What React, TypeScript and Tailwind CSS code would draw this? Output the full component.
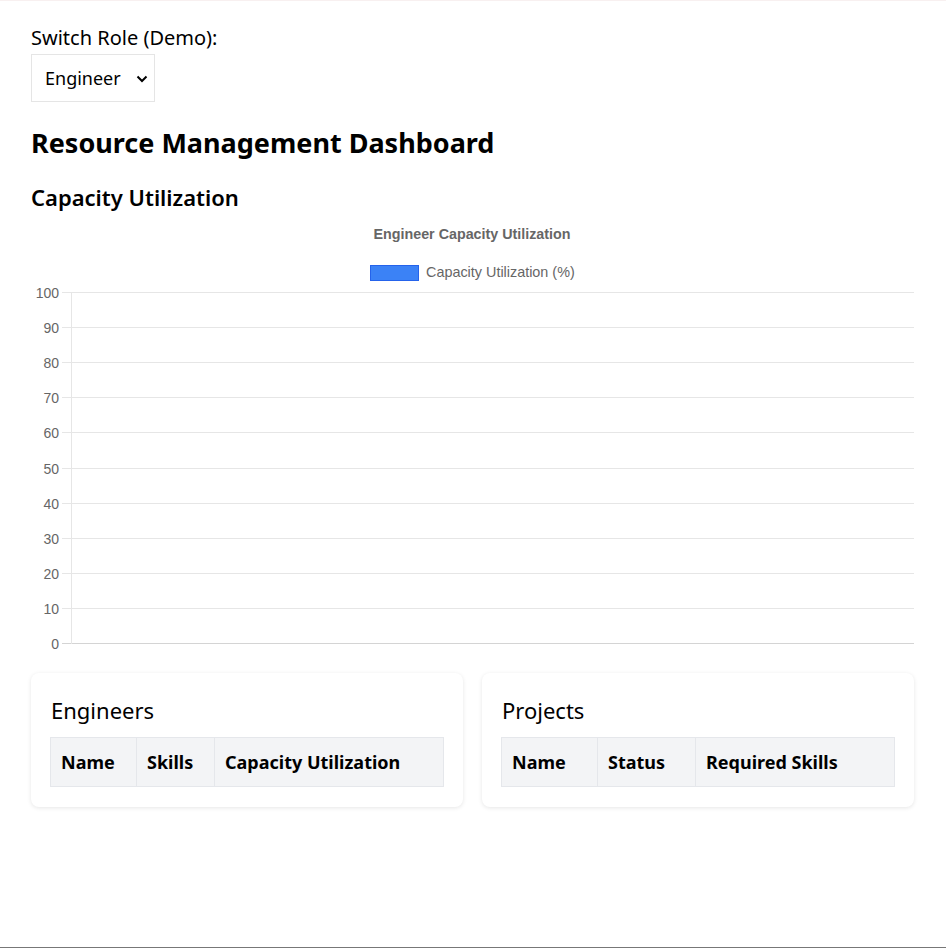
import React, { useState } from "react";

const ticks = [100, 90, 80, 70, 60, 50, 40, 30, 20, 10, 0];

function Chart() {
  const top = 75;
  const step = 35.1;
  return (
    <svg width="883" height="440" viewBox="0 0 883 440" className="block">
      <text x="441" y="21.5" textAnchor="middle" fontFamily="'Liberation Sans', Arial, sans-serif" fontSize="14.3" fontWeight="700" fill="#666">
        Engineer Capacity Utilization
      </text>
      <rect x="339.5" y="48.5" width="48" height="15" fill="#3b82f6" stroke="#2563eb" strokeWidth="1" />
      <text x="395" y="60" fontFamily="'Liberation Sans', Arial, sans-serif" fontSize="14.4" fill="#666">
        Capacity Utilization (%)
      </text>
      {ticks.map((t, i) => {
        const y = Math.round(top + i * step) + 0.5;
        return (
          <g key={t}>
            <line x1="31" x2="883" y1={y} y2={y} stroke={t === 0 ? "#d4d4d4" : "#e6e6e6"} strokeWidth="1" />
            <text x="28" y={y + 5} textAnchor="end" fontFamily="'Liberation Sans', Arial, sans-serif" fontSize="14" fill="#666">
              {t}
            </text>
          </g>
        );
      })}
      <line x1="40.5" x2="40.5" y1={top} y2={Math.round(top + 10 * step) + 1} stroke="#e6e6e6" strokeWidth="1" />
    </svg>
  );
}

function Card({ title, cols }: { title: string; cols: { label: string; w: string }[] }) {
  return (
    <div className="rounded-lg bg-white px-[19px] pb-5 pt-[22px] shadow-[0_1px_4px_rgba(0,0,0,0.1)]">
      <h3 className="pl-[1px] text-[22px] leading-[30px] font-normal text-black">{title}</h3>
      <table className="mt-[12px] w-full border-collapse">
        <thead>
          <tr className="bg-[#f3f4f6]">
            {cols.map((c) => (
              <th key={c.label} className={`border border-[#e5e7eb] px-[10px] py-[10px] text-left text-[18px] leading-[28px] font-bold text-black ${c.w}`}>
                {c.label}
              </th>
            ))}
          </tr>
        </thead>
        <tbody></tbody>
      </table>
    </div>
  );
}

export default function App() {
  const [role, setRole] = useState("Engineer");
  return (
    <div
      className="min-h-[949px] border-t border-[#f8f0f0] bg-white text-black"
      style={{ fontFamily: "'Noto Sans', 'Open Sans', sans-serif" }}
    >
      <div className="flex min-h-[947px] flex-col border-b border-[#777] pl-[31px] pr-[32px] pt-[23px]">
        <label className="block text-[20px] leading-[28px]">Switch Role (Demo):</label>
        <div className="relative mt-[2px] w-[124px]">
          <select
            value={role}
            onChange={(e) => setRole(e.target.value)}
            className="h-[48px] w-[124px] appearance-none border border-[#e5e5e5] bg-white pl-[13px] text-[18px] text-black outline-none"
          >
            <option>Engineer</option>
            <option>Manager</option>
          </select>
          <svg className="pointer-events-none absolute right-[7px] top-[21px]" width="12" height="8" viewBox="0 0 12 8">
            <path d="M1.5 1.5 L6 6 L10.5 1.5" fill="none" stroke="#000" strokeWidth="2" />
          </svg>
        </div>
        <h1 className="mt-[23px] text-[27px] leading-[36px] font-bold">Resource Management Dashboard</h1>
        <h2 className="mt-[21px] text-[22px] leading-[30px] font-semibold">Capacity Utilization</h2>
        <div className="mt-[5px]">
          <Chart />
        </div>
        <div className="mt-[16px] grid grid-cols-2 gap-[19px]">
          <Card
            title="Engineers"
            cols={[
              { label: "Name", w: "w-[86px]" },
              { label: "Skills", w: "w-[78px]" },
              { label: "Capacity Utilization", w: "" },
            ]}
          />
          <Card
            title="Projects"
            cols={[
              { label: "Name", w: "w-[96px]" },
              { label: "Status", w: "w-[98px]" },
              { label: "Required Skills", w: "" },
            ]}
          />
        </div>
      </div>
    </div>
  );
}
